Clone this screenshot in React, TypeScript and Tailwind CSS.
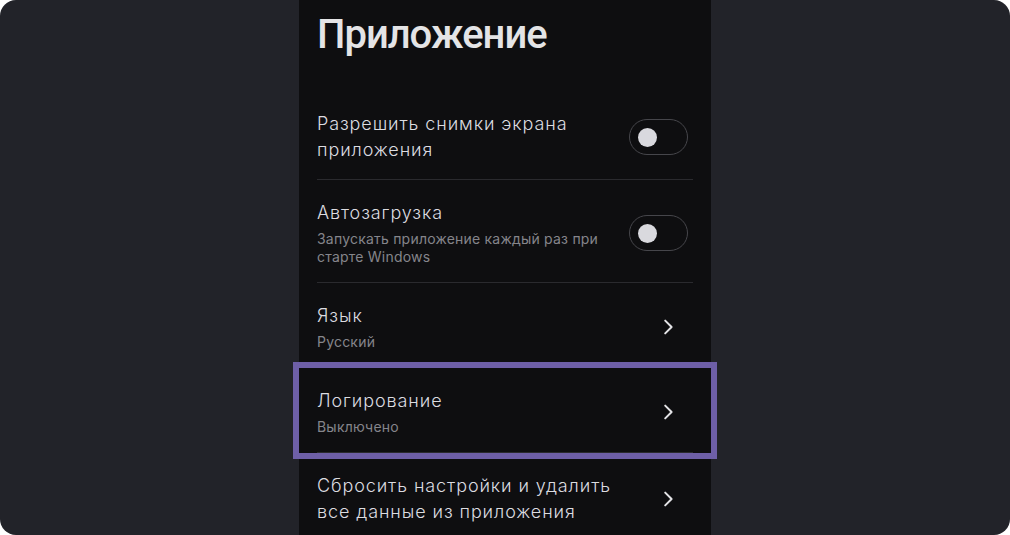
import React from "react";

type Row = {
  title: string;
  subtitle?: string;
  control: "toggle" | "chevron";
  highlight?: boolean;
};

const ROWS: Row[] = [
  { title: "Разрешить снимки экрана приложения", control: "toggle" },
  {
    title: "Автозагрузка",
    subtitle: "Запускать приложение каждый раз при старте Windows",
    control: "toggle",
  },
  { title: "Язык", subtitle: "Русский", control: "chevron" },
  { title: "Логирование", subtitle: "Выключено", control: "chevron", highlight: true },
  { title: "Сбросить настройки и удалить все данные из приложения", control: "chevron" },
];

function Toggle() {
  return (
    <div className="mr-[5px] flex h-[36px] w-[59px] shrink-0 items-center rounded-full border border-[#46464b] pl-[8px]">
      <div className="size-[19px] rounded-full bg-[#d9d9de]" />
    </div>
  );
}

function Chevron() {
  return (
    <svg
      width="12"
      height="16"
      viewBox="0 0 12 16"
      fill="none"
      className="mr-[18px] shrink-0"
    >
      <path
        d="M2.2 1.6L8.6 8L2.2 14.4"
        stroke="#e4e4e7"
        strokeWidth="2"
        strokeLinecap="round"
        strokeLinejoin="round"
      />
    </svg>
  );
}

export default function App() {
  return (
    <div className="h-[535px] w-[1010px] overflow-hidden bg-white">
      <div
        className="flex h-full w-full justify-center overflow-hidden rounded-2xl bg-[#222329]"
        style={{ fontFamily: "Inter, 'Noto Sans', sans-serif" }}
      >
        <div className="h-full w-[412px] bg-[#0e0e10]">
          <h1 className="px-[18px] pt-[11px] pb-[32px] font-['Roboto',sans-serif] text-[40px] leading-[48px] font-medium tracking-[-0.025em] text-[#e4e4e6]">
            Приложение
          </h1>

          {ROWS.map((row, i) => (
            <div key={i} className="relative px-[18px]">
              <div
                className={
                  "flex items-center pt-5 pb-4 " +
                  (i < ROWS.length - 1 ? "border-b border-[#2a2a2e]" : "")
                }
              >
                <div className="w-[312px]">
                  <div className="text-[18px] leading-[26px] font-light tracking-[0.05em] text-[#dcdce0]">
                    {row.title}
                  </div>
                  {row.subtitle && (
                    <div className="mt-1 text-[14px] leading-[18px] tracking-[0.015em] text-[#85858b]">
                      {row.subtitle}
                    </div>
                  )}
                </div>
                <div className="ml-auto flex items-center">
                  {row.control === "toggle" ? <Toggle /> : <Chevron />}
                </div>
              </div>
              {row.highlight && (
                <div className="pointer-events-none absolute -top-[6px] -right-[6px] -bottom-[6px] -left-[6px] border-[6px] border-[#6e5fa7]" />
              )}
            </div>
          ))}
        </div>
      </div>
    </div>
  );
}
